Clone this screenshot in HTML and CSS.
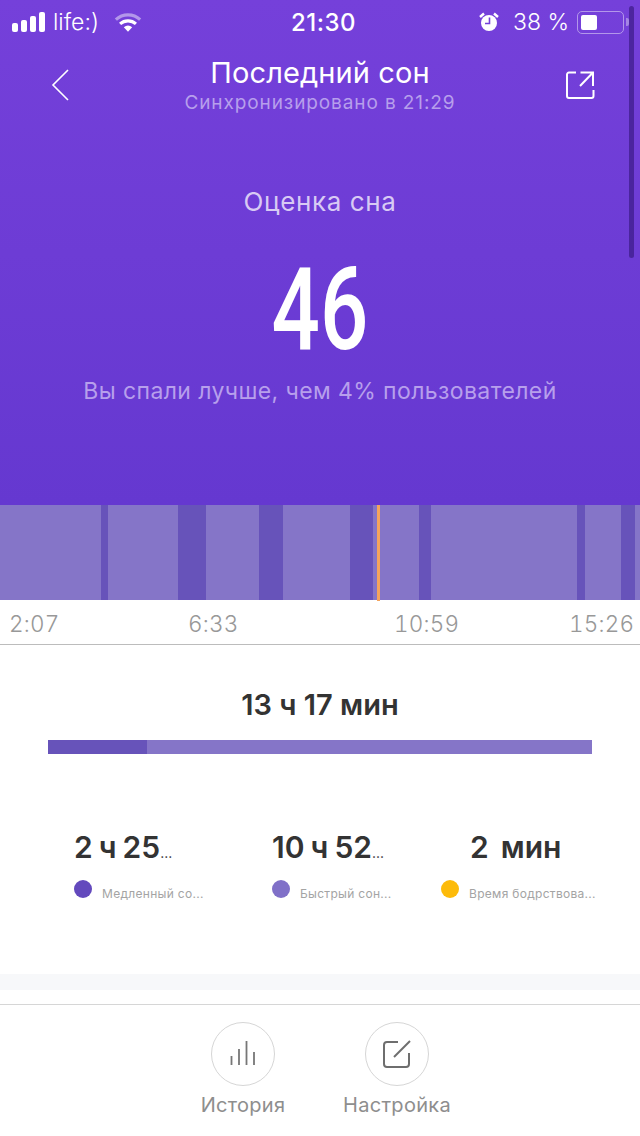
FILE: index.html
```html
<!DOCTYPE html>
<html lang="ru">
<head>
  <meta charset="UTF-8">
  <meta name="viewport" content="width=device-width, initial-scale=1.0">
  <title>Последний сон</title>
  <link rel="stylesheet" href="styles.css">
</head>
<body>

  <div class="container">
    <!-- Hero -->
    <div class="hero">
      <div class="status">
        <div class="status-left">
          <div class="signal">
            <span class="bar bar-1"></span>
            <span class="bar bar-2"></span>
            <span class="bar bar-3"></span>
            <span class="bar bar-4"></span>
          </div>
          <span class="carrier">life:)</span>
          <svg class="wifi" width="28" height="21" viewBox="0 0 30 22">
            <path d="M2 8 A19 19 0 0 1 28 8" fill="none" stroke="#b397ea" stroke-width="3.4"/>
            <path d="M6.5 12.5 A13 13 0 0 1 23.5 12.5" fill="none" stroke="#fff" stroke-width="3.4"/>
            <path d="M10.5 16 A7 7 0 0 1 19.5 16 L15 21 Z" fill="#fff"/>
          </svg>
        </div>
        <span class="clock">21:30</span>
        <div class="status-right">
          <svg class="alarm" width="20" height="20" viewBox="0 0 20 20">
            <circle cx="10" cy="11" r="8" fill="#fff"/>
            <path d="M1 5 L5 1.5 M19 5 L15 1.5" stroke="#fff" stroke-width="2.4" fill="none"/>
            <path d="M10.5 5.5 V11.5 H6" stroke="#7540d9" stroke-width="1.6" fill="none"/>
          </svg>
          <span class="percent">38 %</span>
          <div class="battery"><div class="battery-fill"></div></div>
          <span class="battery-tip"></span>
        </div>
      </div>

      <div class="nav">
        <svg class="nav-icon" width="20" height="32" viewBox="0 0 20 32">
          <path d="M17 1 L2 16 L17 31" fill="none" stroke="#fff" stroke-width="1.6"/>
        </svg>
        <div class="nav-title">
          <h1>Последний сон</h1>
          <p>Синхронизировано в 21:29</p>
        </div>
        <svg class="nav-icon" width="30" height="30" viewBox="0 0 30 30">
          <path d="M11 2.500 H4 A2 2 0 0 0 2 4.500 V26 A2 2 0 0 0 4 28 H26.500 A2 2 0 0 0 28.500 26 V20" fill="none" stroke="#fff" stroke-width="2"/>
          <path d="M15 16 L27.500 3 M15.500 2.500 H28 V16" fill="none" stroke="#fff" stroke-width="2"/>
        </svg>
      </div>

      <div class="score">
        <div class="score-label">Оценка сна</div>
        <div class="score-value">46</div>
        <div class="score-note">Вы спали лучше, чем 4% пользователей</div>
      </div>
      <div class="scrollbar"></div>
    </div>

    <!-- Timeline -->
    <div class="timeline">
      <span class="seg seg-light" style="width:101px"></span>
      <span class="seg seg-dark" style="width:7px"></span>
      <span class="seg seg-light" style="width:70px"></span>
      <span class="seg seg-dark" style="width:28px"></span>
      <span class="seg seg-light" style="width:53px"></span>
      <span class="seg seg-dark" style="width:24px"></span>
      <span class="seg seg-light" style="width:67px"></span>
      <span class="seg seg-dark" style="width:23px"></span>
      <span class="seg seg-light" style="width:46px"></span>
      <span class="seg seg-dark" style="width:12px"></span>
      <span class="seg seg-light" style="width:146px"></span>
      <span class="seg seg-dark" style="width:8px"></span>
      <span class="seg seg-light" style="width:36px"></span>
      <span class="seg seg-dark" style="width:14px"></span>
      <span class="seg seg-light" style="width:5px"></span>
      <div class="marker"></div>
    </div>
    <div class="times">
      <span>2:07</span>
      <span>6:33</span>
      <span>10:59</span>
      <span>15:26</span>
    </div>

    <!-- Summary -->
    <div class="summary">
      <h2>13 ч 17 мин</h2>
      <div class="total-bar"><div class="total-deep"></div></div>
      <div class="stats">
        <div class="stat stat-deep">
          <div class="stat-value">2 ч 25<small>...</small></div>
          <div class="stat-legend"><span class="dot dot-deep"></span><span>Медленный со...</span></div>
        </div>
        <div class="stat stat-light">
          <div class="stat-value">10 ч 52<small>...</small></div>
          <div class="stat-legend"><span class="dot dot-light"></span><span>Быстрый сон...</span></div>
        </div>
        <div class="stat stat-awake">
          <div class="stat-value">2 &nbsp;мин</div>
          <div class="stat-legend"><span class="dot dot-awake"></span><span>Время бодрствова...</span></div>
        </div>
      </div>
    </div>

    <div class="band"></div>

    <!-- Bottom actions -->
    <div class="actions">
      <div class="action">
        <div class="action-circle">
          <svg width="26" height="26" viewBox="0 0 26 26">
            <path d="M1.500 15 V24 M9 8 V24 M16.500 0 V24 M24 11 V24" fill="none" stroke="#777" stroke-width="1.800"/>
          </svg>
        </div>
        <span>История</span>
      </div>
      <div class="action">
        <div class="action-circle">
          <svg width="28" height="28" viewBox="0 0 28 28">
            <path d="M15 2 H4 A3 3 0 0 0 1 5 V24 A3 3 0 0 0 4 27 H23 A3 3 0 0 0 26 24 V13" fill="none" stroke="#6e6e6e" stroke-width="2"/>
            <path d="M11 17 L27 1" fill="none" stroke="#6e6e6e" stroke-width="2"/>
          </svg>
        </div>
        <span>Настройка</span>
      </div>
    </div>
  </div>

</body>
</html>
```

FILE: styles.css
```css
* {
  margin: 0;
  padding: 0;
  box-sizing: border-box;
}

body, html {
  width: 640px;
  height: 1136px;
  overflow: hidden;
  background: white;
  font-family: Inter, 'Noto Sans', sans-serif;
}

.container {
  display: flex;
  flex-direction: column;
  height: 100%;
}

/* Hero */
.hero {
  position: relative;
  height: 505px;
  padding-top: 8px;
  color: white;
  background: linear-gradient(to bottom, #7540da 0%, #6538d0 100%);
}

.status {
  display: flex;
  align-items: center;
  height: 28px;
  padding-left: 12px;
  padding-right: 11px;
}

.status-left {
  display: flex;
  align-items: center;
  width: 279px;
}

.signal {
  display: flex;
  align-items: flex-end;
  gap: 3px;
  height: 20px;
}

.bar {
  width: 6px;
  border-radius: 2px;
  background: white;
}

.bar-1 { height: 9px; }
.bar-2 { height: 12px; }
.bar-3 { height: 16px; }
.bar-4 { height: 20px; }

.carrier {
  margin-left: 8px;
  font-size: 23px;
  font-weight: 300;
}

.wifi {
  margin-left: 15px;
}

.clock {
  font-size: 24px;
  font-weight: 500;
  letter-spacing: 0.5px;
}

.status-right {
  display: flex;
  align-items: center;
  margin-left: auto;
}

.percent {
  margin-left: 14px;
  font-size: 23px;
  font-weight: 300;
}

.battery {
  width: 47px;
  height: 23px;
  margin-left: 8px;
  padding: 3px;
  border: 1.500px solid #b397ea;
  border-radius: 5px;
}

.battery-fill {
  width: 16px;
  height: 100%;
  border-radius: 2px;
  background: white;
}

.battery-tip {
  width: 3px;
  height: 8px;
  margin-left: 2px;
  background: #a585e5;
  border-radius: 0 2px 2px 0;
}

.nav {
  display: flex;
  justify-content: space-between;
  align-items: center;
  margin-top: 19px;
  padding-left: 51px;
  padding-right: 45px;
}

.nav-title {
  text-align: center;
  margin-top: 3px;
  margin-left: 4px;
}

.nav-title h1 {
  font-size: 29px;
  font-weight: 400;
  line-height: 30px;
  margin-bottom: 4px;
  letter-spacing: 0.1px;
}

.nav-title p {
  font-size: 19px;
  line-height: 22px;
  letter-spacing: 0.9px;
  color: #b79fec;
}

.score {
  text-align: center;
  margin-top: 72px;
}

.score-label {
  font-size: 26px;
  line-height: 32px;
  letter-spacing: 0.6px;
  color: #d8caf4;
}

.score-value {
  font-family: Roboto, sans-serif;
  font-size: 115px;
  font-weight: 500;
  line-height: 134px;
  margin-top: 25px;
  transform: scaleX(0.74);
}

.score-note {
  font-size: 23px;
  line-height: 28px;
  letter-spacing: 0.4px;
  color: #b79fec;
}

.scrollbar {
  position: absolute;
  top: 6px;
  right: 6px;
  width: 5px;
  height: 252px;
  border-radius: 3px;
  background: rgba(50, 20, 120, 0.6);
}

/* Timeline */
.timeline {
  position: relative;
  display: flex;
  height: 95px;
}

.seg {
  display: block;
  flex-shrink: 0;
}

.seg-light { background: #8575c8; }
.seg-dark { background: #6753ba; }

.marker {
  position: absolute;
  top: 0;
  left: 377px;
  width: 3px;
  height: 96px;
  background: #f5a45c;
}

.times {
  display: grid;
  grid-template-columns: 179px 206px 175px 1fr;
  height: 45px;
  padding-top: 9px;
  padding-left: 9px;
  border-bottom: 1px solid #bcbcbc;
  font-size: 22.500px;
  line-height: 30px;
  letter-spacing: 0.2px;
  font-weight: 300;
  font-variant-numeric: tabular-nums;
  color: #989898;
}

/* Summary */
.summary {
  height: 329px;
  padding-top: 42px;
}

.summary h2 {
  font-size: 29px;
  line-height: 36px;
  font-weight: 600;
  text-align: center;
  color: #333;
}

.total-bar {
  height: 14px;
  margin: 17px 48px 0;
  background: #8575c8;
}

.total-deep {
  width: 99px;
  height: 100%;
  background: #6753ba;
}

.stats {
  display: flex;
  margin-top: 74px;
  padding-left: 74px;
}

.stat-deep { width: 198px; }
.stat-light { width: 169px; }

.stat-value {
  height: 38px;
  font-size: 30px;
  line-height: 38px;
  font-weight: 600;
  word-spacing: -1.500px;
  color: #333;
  white-space: nowrap;
}

.stat-value small {
  font-size: 14px;
  font-weight: 400;
}

.stat-awake .stat-value {
  padding-left: 29px;
}

.stat-legend {
  display: flex;
  align-items: flex-start;
  gap: 10px;
  margin-top: 14px;
  font-size: 12px;
  line-height: 18px;
  letter-spacing: 0.3px;
  color: #a4a4a4;
  white-space: nowrap;
}

.stat-legend span:last-child {
  margin-top: 5px;
}

.dot {
  width: 18px;
  height: 18px;
  border-radius: 50%;
}

.dot-deep { background: #6349bd; }
.dot-light { background: #8070c8; }
.dot-awake { background: #fdbb0a; }

.band {
  height: 16px;
  background: #f7f8fa;
}

/* Bottom actions */
.actions {
  flex: 1;
  display: flex;
  justify-content: center;
  gap: 82px;
  margin-top: 14px;
  padding-top: 17px;
  border-top: 1px solid #d6d6d6;
}

.action {
  display: flex;
  flex-direction: column;
  align-items: center;
  width: 72px;
  font-size: 20px;
  line-height: 24px;
  letter-spacing: 0.3px;
  color: #8e8e8e;
  white-space: nowrap;
}

.action-circle {
  display: flex;
  justify-content: center;
  align-items: center;
  width: 64px;
  height: 64px;
  margin-bottom: 7px;
  border: 1px solid #d6d6d6;
  border-radius: 50%;
}
```
